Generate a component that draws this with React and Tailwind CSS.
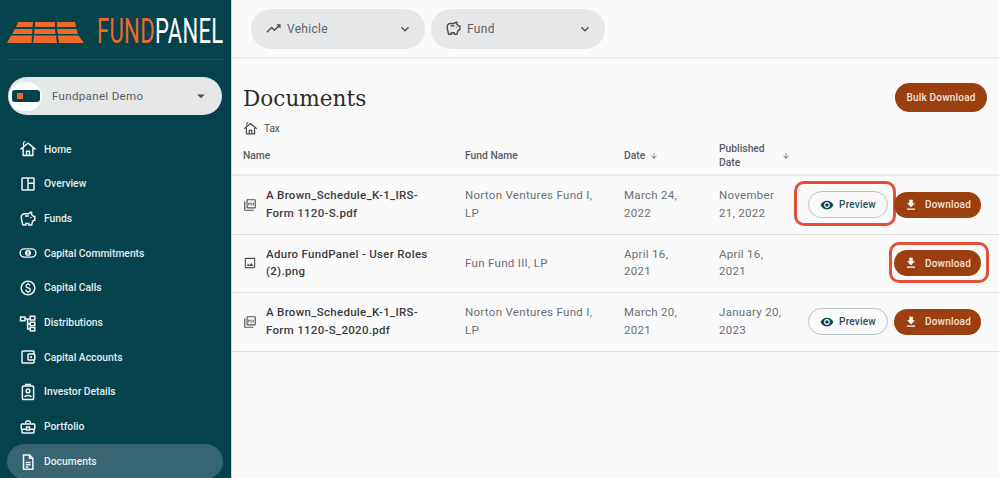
import {
  MdArrowDownward,
  MdArrowDropDown,
  MdExpandMore,
  MdFileDownload,
  MdOutlineAccountBalanceWallet,
  MdOutlineBusinessCenter,
  MdOutlineImage,
  MdOutlinePaid,
  MdOutlinePictureAsPdf,
  MdOutlineSavings,
  MdOutlineSpaceDashboard,
  MdTrendingUp,
  MdVisibility,
} from "react-icons/md";

function HomeIcon({ className }) {
  return (
    <svg viewBox="0 0 24 24" fill="none" stroke="currentColor" strokeWidth="2" strokeLinejoin="round" className={className}>
      <path d="M2 12.500 12 4l10 8.500" />
      <path d="M5.500 10.500v10h13v-10" />
      <path d="M10 20.500v-5.500h4v5.500" />
      <path d="M6 7.500V3l2.500-1" strokeWidth="1.600" />
    </svg>
  );
}

function CommitmentIcon({ className }) {
  return (
    <svg viewBox="0 0 24 24" fill="none" stroke="currentColor" strokeWidth="1.800" className={className}>
      <rect x="1.500" y="6.500" width="21" height="11" rx="5.500" />
      <circle cx="12" cy="12" r="4" fill="currentColor" stroke="none" />
      <path d="M12 9.500v5" stroke="#04434c" strokeWidth="1.200" />
    </svg>
  );
}

function DistributionIcon({ className }) {
  return (
    <svg viewBox="0 0 24 24" fill="none" stroke="currentColor" strokeWidth="2" className={className}>
      <rect x="2" y="4" width="6" height="5" />
      <rect x="15" y="3" width="6" height="5" />
      <rect x="15" y="11" width="6" height="4.500" />
      <rect x="15" y="18" width="6" height="4.500" />
      <path d="M8 6.500h7M11.500 6.500v13.500h3.500M11.500 13h3.500" />
    </svg>
  );
}

function InvestorIcon({ className }) {
  return (
    <svg viewBox="0 0 24 24" fill="none" stroke="currentColor" strokeWidth="2" className={className}>
      <rect x="4.500" y="4" width="15" height="18" rx="1.500" />
      <path d="M9 4V2h6v2" />
      <circle cx="12" cy="10.500" r="2.500" />
      <path d="M7.500 18.500c1-2.500 8-2.500 9 0" />
    </svg>
  );
}

function DocumentIcon({ className }) {
  return (
    <svg viewBox="0 0 24 24" fill="none" stroke="currentColor" strokeWidth="2" strokeLinejoin="round" className={className}>
      <path d="M6 2.500h8l4.500 4.500v14.500H6z" />
      <path d="M14 2.500V7h4.500M9 12.500h6.500M9 15.500h6.500M9 18.500h3.500" />
    </svg>
  );
}

function Logo() {
  return (
    <div className="mx-[7px] flex h-[60px] items-center border-b border-[#14535c] pt-[5px]">
      <svg viewBox="0 0 78 21" className="h-[21px] w-[78px] shrink-0">
        <g fill="#ee6a2b">
          <polygon points="11,0 26,0 25.500,5 9,5" />
          <polygon points="28,0 48,0 48,5 28,5" />
          <polygon points="50,0 68,0 69,5 50,5" />
          <polygon points="8,7 25.500,7 25,12 5,12" />
          <polygon points="27.500,7 48,7 48.500,12 27,12" />
          <polygon points="50,7 69.500,7 71,12 51,12" />
          <polygon points="4,13.500 25,13.500 24.500,21 0,21" />
          <polygon points="27,13.500 49,13.500 50,21 26,21" />
          <polygon points="51,13.500 71.500,13.500 77,21 52,21" />
        </g>
      </svg>
      <div className="ml-[12px] w-[127px] shrink-0">
        <span className="inline-block origin-left scale-x-[0.63] whitespace-nowrap text-[35px] font-normal leading-none tracking-[0.5px]">
          <span className="text-[#ee6a2b]">FUND</span>
          <span className="text-white">PANEL</span>
        </span>
      </div>
    </div>
  );
}

const navItems = [
  { label: "Home", icon: HomeIcon },
  { label: "Overview", icon: MdOutlineSpaceDashboard },
  { label: "Funds", icon: MdOutlineSavings },
  { label: "Capital Commitments", icon: CommitmentIcon },
  { label: "Capital Calls", icon: MdOutlinePaid },
  { label: "Distributions", icon: DistributionIcon },
  { label: "Capital Accounts", icon: MdOutlineAccountBalanceWallet },
  { label: "Investor Details", icon: InvestorIcon },
  { label: "Portfolio", icon: MdOutlineBusinessCenter },
  { label: "Documents", icon: DocumentIcon, active: true },
];

function Sidebar() {
  return (
    <aside className="w-[232px] shrink-0 overflow-hidden border-r border-[#c9d0d2] bg-[#04434c]">
      <Logo />
      <div className="ml-[8px] mr-[9px] mt-[17px] flex h-[38px] items-center rounded-full bg-[#e5e7e9] pl-[1px] pr-[12px]">
        <div className="flex h-[29px] w-[33px] items-center justify-center rounded-full bg-white">
          <div className="flex h-[12px] w-[28px] items-center rounded-[3px] bg-[#04434c] pl-[5px]">
            <div className="h-[6px] w-[6px] bg-[#ee6a2b]" />
          </div>
        </div>
        <span className="ml-[10px] flex-1 pt-px text-[11.500px] tracking-[0.35px] text-[#5a6062]">Fundpanel Demo</span>
        <MdArrowDropDown className="h-[18px] w-[18px] text-[#4a4f52]" />
      </div>
      <nav className="mt-[17px] flex flex-col pl-[7px] pr-[8px]">
        {navItems.map(({ label, icon: Icon, active }) => (
          <div
            key={label}
            className={`flex h-[34.700px] items-center rounded-full pl-[12px] ${active ? "bg-[#376571]" : ""}`}
          >
            <Icon className="h-[18px] w-[18px] shrink-0 text-[#f2f5f5]" />
            <span className="ml-[7px] text-[10.300px] font-medium text-[#e8eeee]">{label}</span>
          </div>
        ))}
      </nav>
    </aside>
  );
}

function FilterPill({ icon: Icon, label }) {
  return (
    <div className="flex h-[40px] w-[174px] items-center rounded-full bg-[#e6e7e9] pl-[14px] pr-[12px] text-[#5c6063]">
      <Icon className="h-[17px] w-[17px] shrink-0 text-[#4d5154]" />
      <span className="ml-[5px] flex-1 text-[12px] tracking-[0.3px]">{label}</span>
      <MdExpandMore className="h-[16px] w-[16px] text-[#4d5154]" />
    </div>
  );
}

function PreviewButton({ highlight }) {
  return (
    <div className="relative">
      <div className="flex h-[27px] w-[80px] items-center justify-center gap-[5px] rounded-full border border-[#bcc2c4] bg-[#fafafa] text-[#24525c]">
        <MdVisibility className="h-[14px] w-[14px] text-[#0d4a55]" />
        <span className="text-[10px] font-medium tracking-[0.2px]">Preview</span>
      </div>
      {highlight && (
        <div className="absolute -bottom-[8px] -left-[14px] -right-[8px] -top-[10px] rounded-[10px] border-[3.500px] border-[#e44f3a]" />
      )}
    </div>
  );
}

function DownloadButton({ highlight }) {
  return (
    <div className="relative">
      <div className="flex h-[26px] w-[87px] items-center justify-center gap-[7px] rounded-full bg-[#9c3f10] text-[#f3e3da]">
        <MdFileDownload className="h-[14px] w-[14px] text-white" />
        <span className="text-[10px] font-medium tracking-[0.2px]">Download</span>
      </div>
      {highlight && (
        <div className="absolute -bottom-[7px] -left-[5px] -right-[8px] -top-[8px] rounded-[10px] border-[3.500px] border-[#e44f3a]" />
      )}
    </div>
  );
}

const rows = [
  {
    name: "A Brown_Schedule_K-1_IRS-Form 1120-S.pdf",
    icon: MdOutlinePictureAsPdf,
    fund: "Norton Ventures Fund I, LP",
    date: "March 24, 2022",
    published: "November 21, 2022",
    preview: true,
    highlightPreview: true,
  },
  {
    name: "Aduro FundPanel - User Roles (2).png",
    icon: MdOutlineImage,
    fund: "Fun Fund III, LP",
    date: "April 16, 2021",
    published: "April 16, 2021",
    highlightDownload: true,
  },
  {
    name: "A Brown_Schedule_K-1_IRS-Form 1120-S_2020.pdf",
    icon: MdOutlinePictureAsPdf,
    fund: "Norton Ventures Fund I, LP",
    date: "March 20, 2021",
    published: "January 20, 2023",
    preview: true,
  },
];

const columns = "grid grid-cols-[222px_159px_95px_82px_1fr]";

function DocumentTable() {
  return (
    <div className="mt-[2px]">
      <div className={`${columns} h-[38px] items-center border-b-2 border-[#ececec] pl-[11px] text-[10.300px] font-medium leading-[14px] text-[#565d61]`}>
        <span>Name</span>
        <span>Fund Name</span>
        <span className="flex items-center gap-[5px]">
          Date <MdArrowDownward className="h-[8px] w-[8px]" />
        </span>
        <span className="flex items-center gap-[15px]">
          <span className="w-[48px]">Published Date</span>
          <MdArrowDownward className="h-[8px] w-[8px]" />
        </span>
        <span />
      </div>
      {rows.map((row) => (
        <div key={row.name} className={`${columns} h-[58.500px] items-center border-b border-[#dcdedf] pl-[11px] text-[11.500px] leading-[17.500px] tracking-[0.3px]`}>
          <div className="flex items-center pr-[25px]">
            <row.icon className="h-[14px] w-[14px] shrink-0 text-[#4f5457]" />
            <span className="ml-[9px] font-medium text-[#3a3d40]">{row.name}</span>
          </div>
          <span className="pr-[20px] text-[#6b6f72]">{row.fund}</span>
          <span className="pr-[30px] text-[#6b6f72]">{row.date}</span>
          <span className="pr-[15px] text-[#6b6f72]">{row.published}</span>
          <div className="flex items-center justify-end gap-[6px] pr-[18px]">
            {row.preview && <PreviewButton highlight={row.highlightPreview} />}
            <DownloadButton highlight={row.highlightDownload} />
          </div>
        </div>
      ))}
    </div>
  );
}

export default function App() {
  return (
    <div className="flex h-[478px] w-[999px] overflow-hidden bg-[#fafafa] font-['Roboto',sans-serif]">
      <Sidebar />
      <main className="min-w-0 flex-1">
        <header className="flex h-[59px] items-center gap-[6px] border-b-2 border-[#ececec] pl-[19px]">
          <FilterPill icon={MdTrendingUp} label="Vehicle" />
          <FilterPill icon={MdOutlineSavings} label="Fund" />
        </header>
        <div className="flex items-center justify-between pl-[11px] pr-[12px] pt-[21px]">
          <h1 className="pt-[4px] font-['DejaVu_Serif',serif] text-[21.600px] leading-[30px] text-[#2b2d2f]">Documents</h1>
          <div className="flex h-[29px] w-[92px] items-center justify-center rounded-full bg-[#9c3f10] text-[10px] font-medium tracking-[0.2px] text-[#f3e3da]">
            Bulk Download
          </div>
        </div>
        <div className="flex items-center gap-[6px] pl-[11px] pt-[7px] text-[10px] text-[#4a4e51]">
          <HomeIcon className="h-[15px] w-[15px]" />
          <span>Tax</span>
        </div>
        <DocumentTable />
      </main>
    </div>
  );
}
